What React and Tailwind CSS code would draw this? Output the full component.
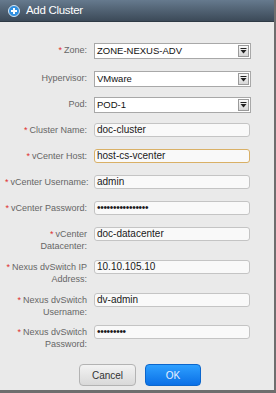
import React from 'react';

const font = { fontFamily: '"Liberation Sans", Arial, sans-serif' };

function DropArrow() {
  return (
    <div className="w-[11px] h-[12px] border border-[#9a9a9a] bg-gradient-to-b from-[#fafafa] to-[#d6d6d6] flex items-center justify-center">
      <svg width="7" height="6" viewBox="0 0 7 6">
        <rect x="0.5" y="0" width="6" height="1" fill="#222" />
        <path d="M0.5 2 L6.5 2 L3.5 5.5 Z" fill="#222" />
      </svg>
    </div>
  );
}

function Label({ children, required }) {
  return (
    <div className="w-[82px] ml-[5px] text-right text-[9px] leading-[12px] text-[#666] pt-[1px] whitespace-nowrap">
      {required && <span className="text-[#e03030] mr-[2px]">*</span>}
      {children}
    </div>
  );
}

function SelectRow({ label, value, required, className }) {
  return (
    <div className={'flex items-start ' + (className || '')}>
      <Label required={required}>{label}</Label>
      <div className="ml-[7px] w-[157px] h-[16px] border border-[#a8a8a8] bg-white flex items-center justify-between pl-[2px] pr-[1px]">
        <span className="text-[9.5px] text-[#111] leading-none">{value}</span>
        <DropArrow />
      </div>
    </div>
  );
}

function InputRow({ label, value, focused, className, mono }) {
  return (
    <div className={'flex items-start ' + (className || '')}>
      <Label required>{label}</Label>
      <div
        className={
          'ml-[7px] w-[156px] h-[14px] rounded-[3px] border bg-[#f9f9f9] flex items-center pl-[2px] ' +
          (focused ? 'border-[#d9b066]' : 'border-[#c4c4c4]')
        }
      >
        <span className={(mono ? 'text-[10px] tracking-[-0.3px] ' : 'text-[10px] ') + 'text-[#1a1a1a] leading-none'}>{value}</span>
      </div>
    </div>
  );
}

export default function App() {
  return (
    <div className="w-[276px] h-[393px] flex flex-col bg-[#eaeaea] border-r-2 border-b-[3px] border-[#6e6e6e]" style={font}>
      {/* Title bar */}
      <div className="h-[22px] shrink-0 flex items-center pl-[8px] bg-gradient-to-b from-[#667a8e] to-[#3c4a58] border-b border-[#2f3a45]">
        <div className="w-[12px] h-[12px] rounded-full bg-[#2f8fe0] border border-[#d6e6f4] flex items-center justify-center">
          <svg width="6" height="6" viewBox="0 0 6 6">
            <rect x="2" y="0" width="2" height="6" fill="#fff" />
            <rect x="0" y="2" width="6" height="2" fill="#fff" />
          </svg>
        </div>
        <span className="ml-[6px] text-[11.5px] text-white tracking-[-0.3px]">Add Cluster</span>
      </div>

      {/* Form */}
      <div className="flex flex-col pt-[21px]">
        <SelectRow label="Zone:" value="ZONE-NEXUS-ADV" required />
        <SelectRow label="Hypervisor:" value="VMware" className="mt-[12px]" />
        <SelectRow label="Pod:" value="POD-1" className="mt-[10px]" />
        <InputRow label="Cluster Name:" value="doc-cluster" className="mt-[10px]" />
        <InputRow label="vCenter Host:" value="host-cs-vcenter" focused className="mt-[12px]" />
        <InputRow label="vCenter Username:" value="admin" className="mt-[12px]" />
        <InputRow label="vCenter Password:" value="••••••••••••••••" mono className="mt-[12px]" />
        <InputRow label={<>vCenter<br />Datacenter:</>} value="doc-datacenter" className="mt-[12px]" />
        <InputRow label={<>Nexus dvSwitch IP<br />Address:</>} value="10.10.105.10" className="mt-[8px]" />
        <InputRow label={<>Nexus dvSwitch<br />Username:</>} value="dv-admin" className="mt-[8px]" />
        <InputRow label={<>Nexus dvSwitch<br />Password:</>} value="•••••••••" mono className="mt-[7px]" />
      </div>

      {/* Buttons */}
      <div className="flex pl-[79px] gap-[9px] mt-[14px]">
        <button className="w-[57px] h-[22px] rounded-[4px] border border-[#b3b3b3] bg-gradient-to-b from-[#f3f3f3] to-[#d9d9d9] text-[10px] text-[#333]">
          Cancel
        </button>
        <button className="w-[56px] h-[22px] rounded-[4px] border border-[#0b66cc] bg-gradient-to-b from-[#2ea0ff] to-[#0a6fe6] text-[10px] text-[#e6efff]">
          OK
        </button>
      </div>
    </div>
  );
}
